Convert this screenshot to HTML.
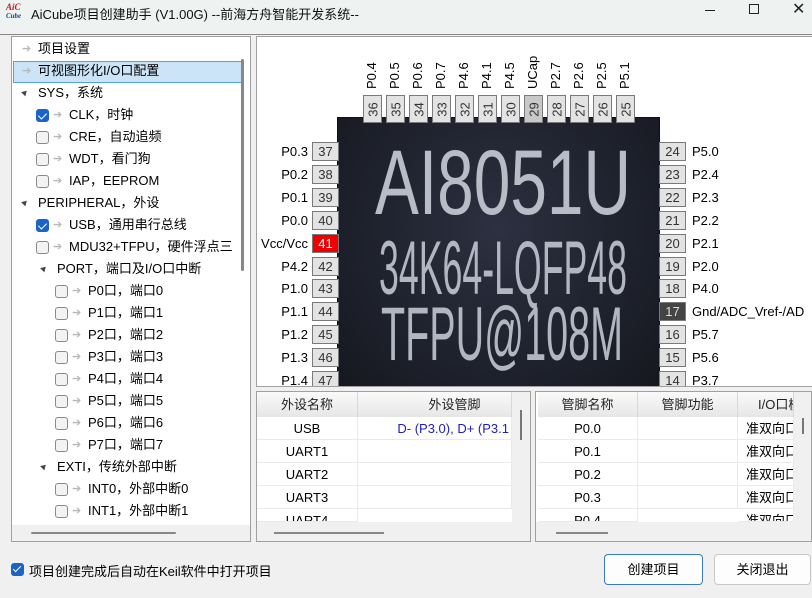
<!DOCTYPE html>
<html><head><meta charset="utf-8"><style>
*{margin:0;padding:0;box-sizing:border-box}
body{width:812px;height:598px;overflow:hidden;background:#f0f0f0;font-family:"Liberation Sans","Noto Sans CJK SC",sans-serif;font-size:13px;color:#000;position:relative}
.a{position:absolute}
.title{left:0;top:0;width:812px;height:35px;background:#eef2f0;border-bottom:1px solid #8a8a8a}
.tree{left:11px;top:36px;width:240px;height:506px;border:1px solid #a0a0a0;background:#fff}
.row{position:absolute;height:22px;line-height:22px;white-space:nowrap;font-size:13px}
.cb{position:absolute;width:13px;height:13px;border:1px solid #8a8a8a;border-radius:3px;background:#f3f3f3;top:5px}
.cb.on{background:#1a64c8;border-color:#1a64c8}
.cb.on:after{content:"";position:absolute;left:3px;top:1px;width:4px;height:7px;border:solid #fff;border-width:0 1.5px 1.5px 0;transform:rotate(45deg)}
.ar{position:absolute;color:#b8b8b8;font-size:11px}
.tri{position:absolute;width:0;height:0;border-left:3px solid transparent;border-right:3px solid transparent;border-bottom:5px solid #444;transform:rotate(45deg);top:8px}
.chipv{left:256px;top:36px;width:556px;height:351px;border:1px solid #a0a0a0;border-right:none;background:#fff;overflow:hidden}
.pin{position:absolute;background:#e3e3e3;border:1px solid #7a7a7a;color:#333;font-size:13px;text-align:center}
.lbl{position:absolute;font-size:13px;color:#000;white-space:nowrap}
.tb{position:absolute;border:1px solid #a0a0a0;background:#fff;overflow:hidden}
.hd{position:absolute;top:0;height:25px;line-height:25px;text-align:center;background:linear-gradient(#fafafa,#e6e6e6);border-right:1px solid #d8d8d8;font-size:13px;color:#222;white-space:nowrap;overflow:hidden}
.cell{position:absolute;height:23px;line-height:23px;text-align:center;border-bottom:1px solid #eaeaea;border-right:1px solid #eaeaea;font-size:13px;white-space:nowrap;overflow:hidden}
.btn{position:absolute;height:31px;line-height:29px;text-align:center;background:#fdfdfd;border:1px solid #c8c8c8;border-radius:4px;font-size:13px}
.ct{position:absolute;white-space:nowrap;font-family:"Liberation Sans",sans-serif;transform-origin:0 0}
</style></head><body>
<div class="a title">
 <div class="a" style="left:6px;top:3px;width:18px;font:italic bold 9px 'Liberation Serif',serif;color:#c02020;line-height:8px">AiC<br><span style="color:#2040a0;font-size:7px">Cube</span></div>
 <div class="a" style="left:31px;top:4px;font-size:13px;color:#111">AiCube项目创建助手 (V1.00G) --前海方舟智能开发系统--</div>
 <div class="a" style="left:705px;top:10px;width:10px;height:1px;background:#222"></div>
 <div class="a" style="left:749px;top:4px;width:10px;height:10px;border:1px solid #222"></div>
 <div class="a" style="left:792px;top:-1px;font-size:16px;color:#222">✕</div>
</div>

<div class="a tree">
 <div class="a" style="left:1px;top:24px;width:229px;height:22px;background:#cce4f7;border:1px solid #5aa0dc"></div>
 <div class="a" style="left:229px;top:22px;width:3px;height:212px;background:#888;border-radius:2px"></div>
 <div class="a" style="left:0;top:488px;width:238px;height:16px;background:#f0f0f0"></div>
 <div class="a" style="left:19px;top:495px;width:145px;height:2px;background:#888;border-radius:2px"></div>
 <div class="row" style="left:10px;top:1px"><span class="ar" style="left:0">➔</span><span style="position:absolute;left:16px">项目设置</span></div>
 <div class="row" style="left:10px;top:23px"><span class="ar" style="left:0">➔</span><span style="position:absolute;left:16px">可视图形化I/O口配置</span></div>
 <div class="row" style="left:10px;top:45px"><span class="tri" style="left:0"></span><span style="position:absolute;left:16px">SYS，系统</span></div>
 <div class="row" style="left:24px;top:67px"><span class="cb on" style="left:0"></span><span class="ar" style="left:17px">➔</span><span style="position:absolute;left:33px">CLK，时钟</span></div>
 <div class="row" style="left:24px;top:89px"><span class="cb" style="left:0"></span><span class="ar" style="left:17px">➔</span><span style="position:absolute;left:33px">CRE，自动追频</span></div>
 <div class="row" style="left:24px;top:111px"><span class="cb" style="left:0"></span><span class="ar" style="left:17px">➔</span><span style="position:absolute;left:33px">WDT，看门狗</span></div>
 <div class="row" style="left:24px;top:133px"><span class="cb" style="left:0"></span><span class="ar" style="left:17px">➔</span><span style="position:absolute;left:33px">IAP，EEPROM</span></div>
 <div class="row" style="left:10px;top:155px"><span class="tri" style="left:0"></span><span style="position:absolute;left:16px">PERIPHERAL，外设</span></div>
 <div class="row" style="left:24px;top:177px"><span class="cb on" style="left:0"></span><span class="ar" style="left:17px">➔</span><span style="position:absolute;left:33px">USB，通用串行总线</span></div>
 <div class="row" style="left:24px;top:199px;width:200px;overflow:hidden"><span class="cb" style="left:0"></span><span class="ar" style="left:17px">➔</span><span style="position:absolute;left:33px">MDU32+TFPU，硬件浮点三</span></div>
 <div class="row" style="left:29px;top:221px"><span class="tri" style="left:0"></span><span style="position:absolute;left:16px">PORT，端口及I/O口中断</span></div>
 <div class="row" style="left:43px;top:243px"><span class="cb" style="left:0"></span><span class="ar" style="left:17px">➔</span><span style="position:absolute;left:33px">P0口，端口0</span></div>
 <div class="row" style="left:43px;top:265px"><span class="cb" style="left:0"></span><span class="ar" style="left:17px">➔</span><span style="position:absolute;left:33px">P1口，端口1</span></div>
 <div class="row" style="left:43px;top:287px"><span class="cb" style="left:0"></span><span class="ar" style="left:17px">➔</span><span style="position:absolute;left:33px">P2口，端口2</span></div>
 <div class="row" style="left:43px;top:309px"><span class="cb" style="left:0"></span><span class="ar" style="left:17px">➔</span><span style="position:absolute;left:33px">P3口，端口3</span></div>
 <div class="row" style="left:43px;top:331px"><span class="cb" style="left:0"></span><span class="ar" style="left:17px">➔</span><span style="position:absolute;left:33px">P4口，端口4</span></div>
 <div class="row" style="left:43px;top:353px"><span class="cb" style="left:0"></span><span class="ar" style="left:17px">➔</span><span style="position:absolute;left:33px">P5口，端口5</span></div>
 <div class="row" style="left:43px;top:375px"><span class="cb" style="left:0"></span><span class="ar" style="left:17px">➔</span><span style="position:absolute;left:33px">P6口，端口6</span></div>
 <div class="row" style="left:43px;top:397px"><span class="cb" style="left:0"></span><span class="ar" style="left:17px">➔</span><span style="position:absolute;left:33px">P7口，端口7</span></div>
 <div class="row" style="left:29px;top:419px"><span class="tri" style="left:0"></span><span style="position:absolute;left:16px">EXTI，传统外部中断</span></div>
 <div class="row" style="left:43px;top:441px"><span class="cb" style="left:0"></span><span class="ar" style="left:17px">➔</span><span style="position:absolute;left:33px">INT0，外部中断0</span></div>
 <div class="row" style="left:43px;top:463px"><span class="cb" style="left:0"></span><span class="ar" style="left:17px">➔</span><span style="position:absolute;left:33px">INT1，外部中断1</span></div>
</div>

<div class="a chipv" id="cv">
 <div class="a" style="left:80px;top:80px;width:323px;height:280px;background:radial-gradient(ellipse at 50% 40%,#2c3040,#1c1f29 70%,#15171e);border:1px solid #111"></div>
 <div class="ct" data-w="256" data-h="66" style="left:118px;top:117px;color:#b8bcc6">AI8051U</div>
 <div class="ct" data-w="248" data-h="55" style="left:122px;top:208px;color:#b2b6c0">34K64-LQFP48</div>
 <div class="ct" data-w="242" data-h="55" style="left:124px;top:274px;color:#b2b6c0">TFPU@108M</div>
</div>

<div class="tb" style="left:256px;top:391px;width:275px;height:151px">
 <div class="hd" style="left:0;width:101px">外设名称</div>
 <div class="hd" style="left:101px;width:154px;padding-left:40px">外设管脚</div>
 <div class="cell" style="left:0;top:25px;width:101px">USB</div><div class="cell" style="left:101px;top:25px;width:154px;color:#2020c0;text-align:right;padding-right:2px">D- (P3.0), D+ (P3.1</div>
 <div class="cell" style="left:0;top:48px;width:101px">UART1</div><div class="cell" style="left:101px;top:48px;width:154px"></div>
 <div class="cell" style="left:0;top:71px;width:101px">UART2</div><div class="cell" style="left:101px;top:71px;width:154px"></div>
 <div class="cell" style="left:0;top:94px;width:101px">UART3</div><div class="cell" style="left:101px;top:94px;width:154px"></div>
 <div class="cell" style="left:0;top:117px;width:101px;height:13px;line-height:23px">UART4</div>
 <div class="a" style="left:0;top:130px;width:273px;height:20px;background:#f0f0f0"></div>
 <div class="a" style="left:17px;top:140px;width:110px;height:2px;background:#888"></div>
 <div class="a" style="left:255px;top:0;width:18px;height:130px;background:#f0f0f0"></div>
 <div class="a" style="left:263px;top:18px;width:2px;height:30px;background:#777"></div>
</div>

<div class="tb" style="left:535px;top:391px;width:277px;height:151px">
 <div class="hd" style="left:2px;width:100px">管脚名称</div>
 <div class="hd" style="left:102px;width:100px">管脚功能</div>
 <div class="hd" style="left:202px;width:56px;text-align:left;padding-left:20px">I/O口模式</div>
 <div class="cell" style="left:2px;top:25px;width:100px">P0.0</div><div class="cell" style="left:102px;top:25px;width:100px"></div><div class="cell" style="left:202px;top:25px;width:56px;text-align:left;padding-left:8px">准双向口</div>
 <div class="cell" style="left:2px;top:48px;width:100px">P0.1</div><div class="cell" style="left:102px;top:48px;width:100px"></div><div class="cell" style="left:202px;top:48px;width:56px;text-align:left;padding-left:8px">准双向口</div>
 <div class="cell" style="left:2px;top:71px;width:100px">P0.2</div><div class="cell" style="left:102px;top:71px;width:100px"></div><div class="cell" style="left:202px;top:71px;width:56px;text-align:left;padding-left:8px">准双向口</div>
 <div class="cell" style="left:2px;top:94px;width:100px">P0.3</div><div class="cell" style="left:102px;top:94px;width:100px"></div><div class="cell" style="left:202px;top:94px;width:56px;text-align:left;padding-left:8px">准双向口</div>
 <div class="cell" style="left:2px;top:117px;width:100px;height:13px">P0.4</div><div class="cell" style="left:202px;top:117px;width:56px;height:13px;text-align:left;padding-left:8px">准双向口</div>
 <div class="a" style="left:0;top:130px;width:275px;height:20px;background:#f0f0f0"></div>
 <div class="a" style="left:20px;top:140px;width:52px;height:2px;background:#888"></div>
 <div class="a" style="left:258px;top:0;width:17px;height:130px;background:#f0f0f0"></div>
 <div class="a" style="left:266px;top:26px;width:2px;height:16px;background:#777"></div>
</div>

<div class="a" style="left:11px;top:563px;width:13px;height:13px;background:#1a64c8;border-radius:3px"></div>
<div class="a" style="left:15px;top:564px;width:4px;height:8px;border:solid #fff;border-width:0 1.5px 1.5px 0;transform:rotate(45deg)"></div>
<div class="a" style="left:29px;top:561px;font-size:13px">项目创建完成后自动在Keil软件中打开项目</div>
<div class="btn" style="left:604px;top:554px;width:99px;border:1px solid #3a7cc4">创建项目</div>
<div class="btn" style="left:714px;top:554px;width:97px">关闭退出</div>

<script>
(function(){
var cv=document.getElementById('cv');var h='';
var tl=['P0.4','P0.5','P0.6','P0.7','P4.6','P4.1','P4.5','UCap','P2.7','P2.6','P2.5','P5.1'];
for(var i=0;i<12;i++){var x=106+i*23;var n=36-i;
h+='<div class="pin" style="left:'+x+'px;top:58px;width:19px;height:28px;'+(n==29?'background:#c8c8c8;':'')+'"><div style="position:absolute;left:-5px;top:7px;width:28px;transform:rotate(-90deg);line-height:13px">'+n+'</div></div>';
h+='<div class="lbl" style="left:'+(x-11)+'px;top:24px;width:40px;text-align:left;transform:rotate(-90deg);line-height:16px">'+tl[i]+'</div>';}
var L=['P0.3','P0.2','P0.1','P0.0','Vcc/Vcc','P4.2','P1.0','P1.1','P1.2','P1.3','P1.4'];
var R=['P5.0','P2.4','P2.3','P2.2','P2.1','P2.0','P4.0','Gnd/ADC_Vref-/AD','P5.7','P5.6','P3.7'];
for(var j=0;j<11;j++){var y=105+j*22.9;var ln=37+j,rn=24-j;
h+='<div class="pin" style="left:55px;top:'+y+'px;width:27px;height:19px;line-height:17px;'+(ln==41?'background:#e00;color:#fff;':'')+'">'+ln+'</div>';
h+='<div class="lbl" style="right:504px;top:'+(y+1)+'px;line-height:17px">'+L[j]+'</div>';
h+='<div class="pin" style="left:402px;top:'+y+'px;width:27px;height:19px;line-height:17px;'+(rn==17?'background:#444;color:#ddd;':'')+'">'+rn+'</div>';
h+='<div class="lbl" style="left:435px;top:'+(y+1)+'px;line-height:17px">'+R[j]+'</div>';}
cv.insertAdjacentHTML('beforeend',h);
var cts=document.querySelectorAll('.ct');
for(var k=0;k<cts.length;k++){var e=cts[k];var tw=+e.getAttribute('data-w'),th=+e.getAttribute('data-h');
e.style.fontSize='100px';e.style.lineHeight='100px';
var w=e.getBoundingClientRect().width;
var sy=th/72, sx=tw/w;
e.style.top=(parseFloat(e.style.top)-19*sy)+'px';
e.style.transform='scale('+sx+','+sy+')';}
})();
</script>
</body></html>
